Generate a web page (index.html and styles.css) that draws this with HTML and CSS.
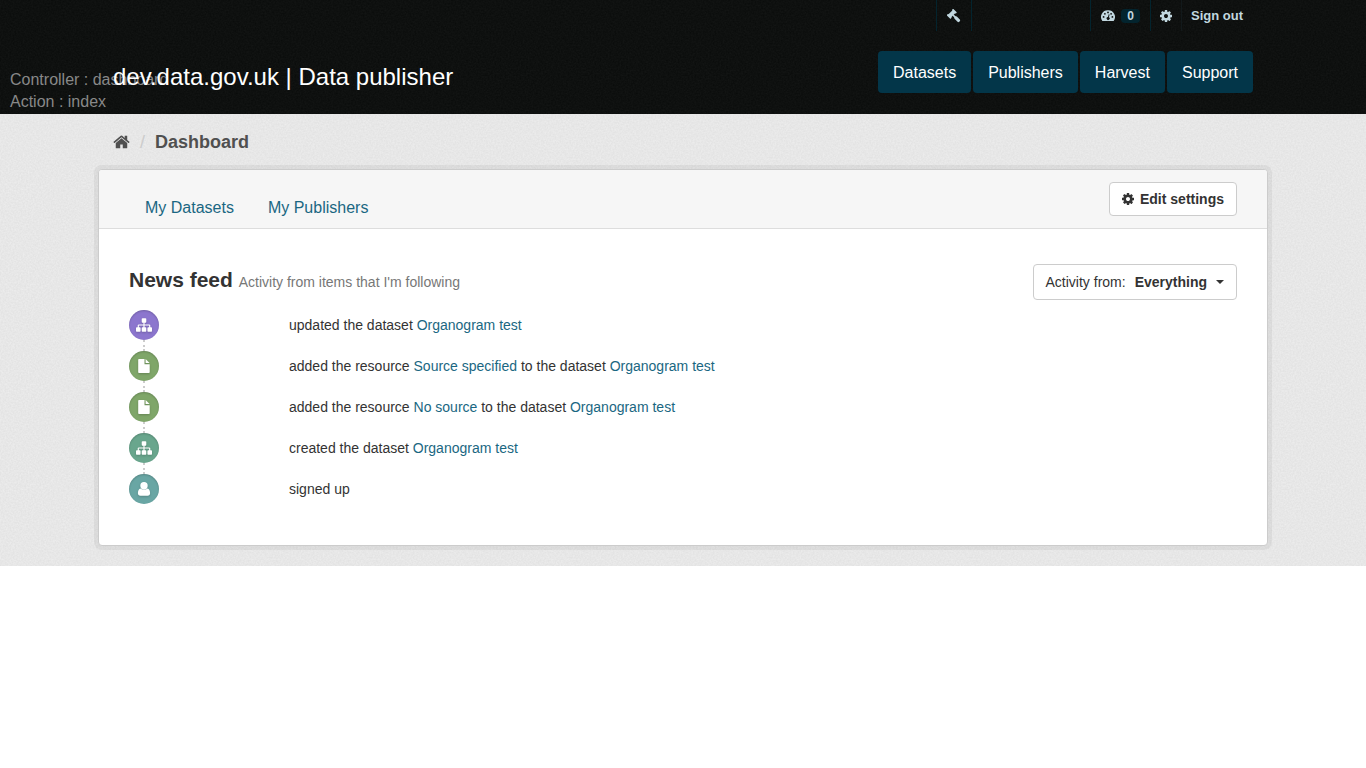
FILE: index.html
```
<!DOCTYPE html>
<html lang="en">
<head>
<meta charset="utf-8">
<title>Dashboard - dev.data.gov.uk | Data publisher</title>
<meta name="viewport" content="width=device-width, initial-scale=1">
<link rel="stylesheet" href="styles.css">
</head>
<body>
<svg class="sprite" aria-hidden="true">
  <symbol id="cog" viewBox="128 128 1536 1536"><path d="M1152 896q0-106-75-181t-181-75-181 75-75 181 75 181 181 75 181-75 75-181zm512-109v222q0 12-8 23t-20 13l-185 28q-19 54-39 91 35 50 107 138 10 12 10 25t-9 23q-27 37-99 108t-94 71q-12 0-26-9l-138-108q-44 23-91 38-16 136-29 186-7 28-36 28h-222q-14 0-24.500-8.500t-11.500-21.500l-28-184q-49-16-90-37l-141 107q-10 9-25 9-14 0-25-11-126-114-165-168-7-10-7-23 0-12 8-23 15-21 51-66.500t54-70.500q-27-50-41-99l-183-27q-13-2-21-12.500t-8-23.500v-222q0-12 8-23t19-13l186-28q14-46 39-92-40-57-107-138-10-12-10-24 0-10 9-23 26-36 98.500-107.500t94.500-71.500q13 0 26 10l138 107q44-23 91-38 16-136 29-186 7-28 36-28h222q14 0 24.500 8.500t11.500 21.500l28 184q49 16 90 37l142-107q9-9 24-9 13 0 25 10 129 119 165 170 7 8 7 22 0 12-8 23-15 21-51 66.500t-54 70.500q26 50 41 98l183 28q13 2 21 12.500t8 23.500z"/></symbol>
  <symbol id="home" viewBox="64 192 1664 1408"><path d="M1472 992v480q0 26-19 45t-45 19h-384v-384h-256v384h-384q-26 0-45-19t-19-45v-480q0-1 .5-3t.5-3l575-474 575 474q1 2 1 6zm223-69l-62 74q-8 9-21 11h-3q-13 0-21-7l-692-577-692 577q-12 8-24 7-13-2-21-11l-62-74q-8-10-7-23.500t11-21.500l719-599q32-26 76-26t76 26l244 204v-195q0-14 9-23t23-9h192q14 0 23 9t9 23v408l219 182q10 8 11 21.500t-7 23.500z"/></symbol>
  <symbol id="sitemap" viewBox="0 0 1792 1792"><path d="M1792 1248v320q0 40-28 68t-68 28h-320q-40 0-68-28t-28-68v-320q0-40 28-68t68-28h96v-192h-512v192h96q40 0 68 28t28 68v320q0 40-28 68t-68 28h-320q-40 0-68-28t-28-68v-320q0-40 28-68t68-28h96v-192h-512v192h96q40 0 68 28t28 68v320q0 40-28 68t-68 28h-320q-40 0-68-28t-28-68v-320q0-40 28-68t68-28h96v-192q0-52 38-90t90-38h512v-192h-96q-40 0-68-28t-28-68v-320q0-40 28-68t68-28h320q40 0 68 28t28 68v320q0 40-28 68t-68 28h-96v192h512q52 0 90 38t38 90v192h96q40 0 68 28t28 68z"/></symbol>
  <symbol id="file" viewBox="0 0 16 16"><path d="M3 1h5.500v5.200h5.200V14.200a.8.800 0 0 1-.8.800H3a.8.800 0 0 1-.8-.8V1.800A.8.800 0 0 1 3 1zM9.600 1.100l4 4H9.600z"/></symbol>
  <symbol id="user" viewBox="0 0 16 16"><path d="M8 1a3.700 3.700 0 1 1 0 7.400A3.700 3.700 0 0 1 8 1zM4.600 7.400a4.800 4.800 0 0 0 6.800 0c2 .2 2.700 2.600 2.700 4.800 0 1.600-1 2.500-2.400 2.500H4.300c-1.400 0-2.400-.9-2.400-2.500 0-2.200.7-4.600 2.700-4.800z"/></symbol>
  <symbol id="gavel" viewBox="0 0 14 14"><g transform="translate(4.800 4.800) rotate(45)"><rect x="-2" y="-3.500" width="4" height="7"/><rect x="-2.700" y="-4.600" width="5.400" height="1.900" rx=".7"/><rect x="-2.700" y="2.700" width="5.400" height="1.900" rx=".7"/><rect x="1.500" y="-.8" width="4" height="1.600"/><rect x="4.300" y="-1.600" width="6.600" height="3.200" rx="1.200"/></g></symbol>
  <symbol id="gauge" viewBox="0 0 14 12"><path fill-rule="evenodd" d="M7 .2a6.700 6.700 0 0 1 5.800 10.500.7.700 0 0 1-.6.300H1.800a.7.700 0 0 1-.6-.3A6.700 6.700 0 0 1 7 .2zM2.600 6a.9.900 0 1 0 0 1.800.9.900 0 0 0 0-1.800zM3.900 2.900a.9.900 0 1 0 0 1.800.9.900 0 0 0 0-1.800zM7 1.500a.9.900 0 1 0 0 1.800.9.900 0 0 0 0-1.800zM10.100 2.900a.9.900 0 1 0 0 1.800.9.900 0 0 0 0-1.800zM11.400 6a.9.900 0 1 0 0 1.800.9.900 0 0 0 0-1.800zM7.700 4.200 7 7a1.500 1.500 0 1 0 .9.200L8.600 4.500z"/></symbol>
</svg>

<header class="masthead">
  <div class="debug">Controller : dashboard<br>Action : index</div>
  <div class="container">
    <nav class="account" aria-label="Account">
      <a class="account-item account-admin" href="#" aria-label="Sysadmin settings"><svg class="icon-gavel"><use href="#gavel"/></svg></a>
      <a class="account-item" href="#" aria-label="Dashboard"><svg class="icon-gauge"><use href="#gauge"/></svg><span class="badge">0</span></a>
      <a class="account-item account-settings" href="#" aria-label="Edit settings"><svg class="icon-cog"><use href="#cog"/></svg></a>
      <a class="account-item" href="#">Sign out</a>
    </nav>
    <div class="masthead-row">
      <a class="site-title" href="#">dev.data.gov.uk | Data publisher</a>
      <nav class="main-nav" aria-label="Main">
        <a href="#">Datasets</a>
        <a href="#">Publishers</a>
        <a href="#">Harvest</a>
        <a href="#">Support</a>
      </nav>
    </div>
  </div>
</header>

<main class="main">
  <nav class="container breadcrumb" aria-label="Breadcrumb">
    <a href="#" aria-label="Home"><svg class="icon-home"><use href="#home"/></svg></a>
    <span class="divider">/</span>
    <a class="current" href="#">Dashboard</a>
  </nav>
  <div class="wrapper">
    <div class="page-header">
      <nav class="tabs" aria-label="Dashboard sections">
        <a href="#">My Datasets</a>
        <a href="#">My Publishers</a>
      </nav>
      <a class="btn btn-strong" href="#"><svg class="icon-cog"><use href="#cog"/></svg>Edit settings</a>
    </div>
    <section class="feed">
      <div class="feed-header">
        <h2>News feed <small>Activity from items that I'm following</small></h2>
        <button class="btn btn-filter" type="button">Activity from: <strong>Everything</strong><span class="caret"></span></button>
      </div>
      <ul class="activity">
        <li><span class="marker marker-updated"><svg><use href="#sitemap"/></svg></span><p>updated the dataset <a href="#">Organogram test</a></p></li>
        <li><span class="marker marker-resource"><svg><use href="#file"/></svg></span><p>added the resource <a href="#">Source specified</a> to the dataset <a href="#">Organogram test</a></p></li>
        <li><span class="marker marker-resource"><svg><use href="#file"/></svg></span><p>added the resource <a href="#">No source</a> to the dataset <a href="#">Organogram test</a></p></li>
        <li><span class="marker marker-created"><svg><use href="#sitemap"/></svg></span><p>created the dataset <a href="#">Organogram test</a></p></li>
        <li><span class="marker marker-user"><svg><use href="#user"/></svg></span><p>signed up</p></li>
      </ul>
    </section>
  </div>
</main>
</body>
</html>
```
FILE: styles.css
```
* { box-sizing: border-box; }

body {
  margin: 0;
  background: #fff;
  color: #333;
  font: 14px/20px "Liberation Sans", Arial, sans-serif;
}

a { color: #1a6782; text-decoration: none; }
a:hover { text-decoration: underline; }
svg { display: block; fill: currentColor; }
.sprite { position: absolute; width: 0; height: 0; }

.icon-cog { width: 12px; height: 12px; }
.icon-gavel { width: 14px; height: 14px; }
.icon-gauge { width: 14px; height: 12px; }
.icon-home { width: 17px; height: 14px; }

.container {
  max-width: 1170px;
  margin: 0 auto;
  padding: 0 15px;
}

.masthead {
  position: relative;
  padding-bottom: 21px;
  background: #0a0c0b url("data:image/svg+xml,%3Csvg xmlns='http://www.w3.org/2000/svg' width='100' height='100'%3E%3Cfilter id='n'%3E%3CfeTurbulence type='fractalNoise' baseFrequency='.6' numOctaves='2' stitchTiles='stitch'/%3E%3CfeColorMatrix values='0 0 0 0 1 0 0 0 0 1 0 0 0 0 1 1 0 0 0 -.2'/%3E%3C/filter%3E%3Crect width='100' height='100' filter='url(%23n)' opacity='.05'/%3E%3C/svg%3E");
}

.masthead .container { position: relative; }

.debug {
  position: absolute;
  left: 10px;
  bottom: 1px;
  color: #888;
  font-size: 16px;
  line-height: 22px;
}

.account {
  display: flex;
  justify-content: flex-end;
  height: 31px;
  font-size: 13px;
  font-weight: bold;
}

.account-item {
  display: flex;
  align-items: center;
  gap: 6px;
  padding: 0 10px;
  border-left: 1px solid #03242e;
  color: #c1d7df;
}

.account-item:last-child { padding-left: 9px; border-left-color: #12191b; }
.account-settings { padding: 0 9px; }

.account-admin {
  margin-right: 118px;
  border-right: 1px solid #03242e;
}

.badge {
  padding: 0 6px;
  border-radius: 4px;
  background: #03242e;
  font-size: 12px;
  line-height: 14px;
}

.masthead-row {
  display: flex;
  align-items: center;
  justify-content: space-between;
  padding-top: 20px;
}

.site-title {
  padding-top: 10px;
  color: #fff;
  font-size: 24px;
  line-height: 32px;
}

.main-nav { display: flex; gap: 2px; }

.main-nav a {
  padding: 11px 15px 9px;
  border-radius: 4px;
  background: #033649;
  color: #fff;
  font-size: 16px;
  line-height: 22px;
}

.main {
  padding-bottom: 20px;
  background: #e3e3e3 url("data:image/svg+xml,%3Csvg xmlns='http://www.w3.org/2000/svg' width='100' height='100'%3E%3Cfilter id='n'%3E%3CfeTurbulence type='fractalNoise' baseFrequency='.6' numOctaves='2' stitchTiles='stitch'/%3E%3CfeColorMatrix values='0 0 0 0 1 0 0 0 0 1 0 0 0 0 1 1.500 0 0 0 -.4'/%3E%3C/filter%3E%3Crect width='100' height='100' filter='url(%23n)' opacity='.4'/%3E%3C/svg%3E");
}

.breadcrumb {
  display: flex;
  align-items: center;
  gap: 10px;
  height: 55px;
  font-size: 18px;
}

.breadcrumb a { color: #505050; }
.breadcrumb .current { font-weight: bold; }
.divider { color: #ccc; }

.wrapper {
  max-width: 1170px;
  margin: 0 auto;
  border: 1px solid #ccc;
  border-radius: 4px;
  background: #fff;
  box-shadow: 0 0 0 4px rgba(0, 0, 0, .05);
}

.page-header {
  display: flex;
  align-items: flex-end;
  justify-content: space-between;
  padding: 12px 30px;
  border-bottom: 1px solid #ddd;
  border-radius: 3px 3px 0 0;
  background: #f6f6f6;
}

.tabs {
  display: flex;
  gap: 34px;
  padding-left: 16px;
  font-size: 16px;
  line-height: 16px;
}

.btn {
  display: flex;
  align-items: center;
  border: 1px solid #ccc;
  border-radius: 4px;
  background: #fff;
  color: #333;
  font: inherit;
  cursor: pointer;
}

.btn-strong { gap: 6px; padding: 6px 12px; font-weight: bold; }
.btn-filter { padding: 7px 12px; }
.btn-filter strong { margin: 0 9px; }

.caret {
  border: 4px solid transparent;
  border-top-color: currentColor;
  border-bottom: 0;
}

.feed { padding: 35px 30px 41px; }

.feed-header {
  display: flex;
  align-items: center;
  justify-content: space-between;
  margin-bottom: 10px;
}

h2 {
  margin: 0;
  padding-bottom: 2px;
  font-size: 21px;
  line-height: 28px;
}

h2 small { color: #777; font-size: 14px; font-weight: normal; }

.activity {
  display: grid;
  gap: 11px;
  margin: 0;
  padding: 0;
  list-style: none;
}

.activity li {
  position: relative;
  display: grid;
  grid-template-columns: 160px 1fr;
  align-items: center;
}

.activity p { margin: 0; }

.activity li:not(:last-child)::after {
  content: "";
  position: absolute;
  top: 100%;
  left: 14px;
  height: 11px;
  border-left: 2px dotted #ccc;
}

.marker {
  display: grid;
  place-items: center;
  width: 30px;
  height: 30px;
  border-radius: 50%;
  color: #fff;
  box-shadow: inset 0 1px 2px rgba(0, 0, 0, .2);
}

.marker svg { width: 16px; height: 16px; filter: drop-shadow(0 1px 1px rgba(0, 0, 0, .2)); }
.marker-updated { background: #8c76ce; }
.marker-resource { background: #7fa669; }
.marker-created { background: #69a68d; }
.marker-user { background: #69a6a4; }
```
